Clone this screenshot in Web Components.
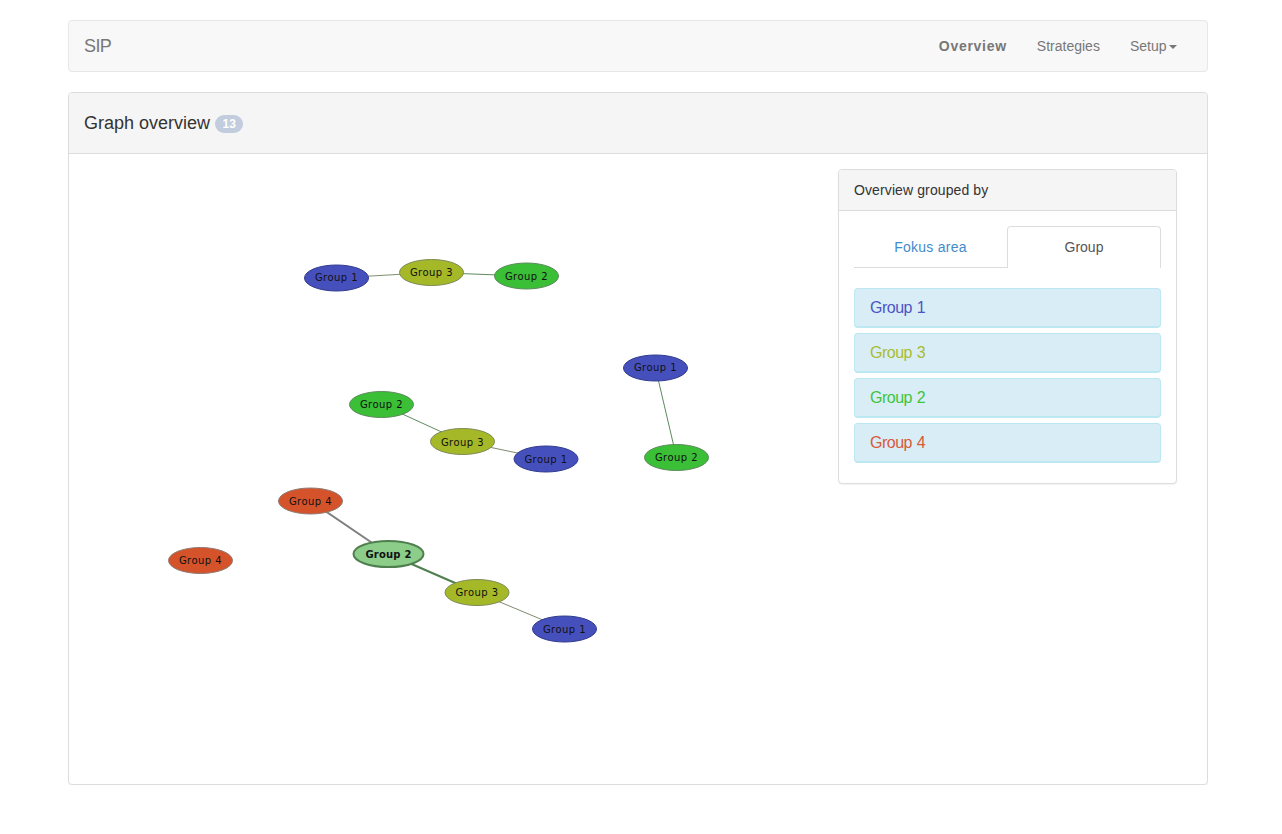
<!DOCTYPE html>
<html><head><meta charset="utf-8"><title>SIP</title>
<style>
html,body{margin:0;padding:0;background:#fff;font-family:"Liberation Sans",Arial,sans-serif;font-size:14px;line-height:20px;color:#333}
</style></head><body>
<sip-app>
  <sip-navbar brand="SIP">
    <sip-navlink active>Overview</sip-navlink>
    <sip-navlink>Strategies</sip-navlink>
    <sip-navlink caret>Setup</sip-navlink>
  </sip-navbar>
  <sip-panel count="13" heading="Graph overview">
    <sip-graph></sip-graph>
    <sip-side slot="side" heading="Overview grouped by">
      <sip-tabs></sip-tabs>
      <sip-group color="#4b55c4">Group 1</sip-group>
      <sip-group color="#a9bc30">Group 3</sip-group>
      <sip-group color="#3fc43c">Group 2</sip-group>
      <sip-group color="#d9593a">Group 4</sip-group>
    </sip-side>
  </sip-panel>
</sip-app>
<script>
function def(name, html, init){
  customElements.define(name, class extends HTMLElement{
    constructor(){super();this.attachShadow({mode:'open'}).innerHTML=html;}
    connectedCallback(){ if(init) init(this,this.shadowRoot); }
  });
}
def('sip-app',`<style>:host{display:block;width:1140px;margin-left:68px;padding-top:20px}</style><slot></slot>`);
def('sip-navbar',`<style>
:host{display:flex;box-sizing:border-box;height:52px;margin-bottom:20px;justify-content:space-between;background:#f8f8f8;border:1px solid #e7e7e7;border-radius:4px}
.b{font-size:18px;line-height:20px;color:#777;padding:15px;letter-spacing:-.6px}
nav{display:flex;margin-right:15.5px}
</style><div class="b"></div><nav><slot></slot></nav>`,(h,s)=>{s.querySelector('.b').textContent=h.getAttribute('brand')});
def('sip-navlink',`<style>
:host{display:block;padding:15px;color:#777;line-height:20px;font-size:14px}
:host([active]){font-weight:bold;letter-spacing:.72px}
.c{display:none;width:0;height:0;margin-left:2px;vertical-align:middle;border-top:4px solid #777;border-left:4px solid transparent;border-right:4px solid transparent}
:host([caret]) .c{display:inline-block}
</style><slot></slot><span class="c"></span>`);
def('sip-panel',`<style>
:host{display:block;box-sizing:border-box;height:693px;background:#fff;border:1px solid #ddd;border-radius:4px;box-shadow:0 1px 1px rgba(0,0,0,.05)}
header{box-sizing:border-box;height:61px;background:#f5f5f5;border-bottom:1px solid #ddd;border-radius:3px 3px 0 0;padding:20px 15px 0;font-size:18px;line-height:20px;color:#333;display:flex;align-items:flex-start}
.badge{display:block;margin:2px 0 0 5px;padding:3px 7.5px;font-size:12px;line-height:12px;font-weight:bold;color:#fff;background:#c1ccdd;border-radius:10px}
.body{display:flex;justify-content:space-between;padding:15px 30px 0 0}
</style><header><span class="t"></span><span class="badge"></span></header>
<div class="body"><slot></slot><slot name="side"></slot></div>`,(h,s)=>{s.querySelector('.t').textContent=h.getAttribute('heading');s.querySelector('.badge').textContent=h.getAttribute('count')});
def('sip-side',`<style>
:host{display:block;box-sizing:border-box;width:339px;height:315px;background:#fff;border:1px solid #ddd;border-radius:4px;box-shadow:0 1px 1px rgba(0,0,0,.05)}
header{box-sizing:border-box;height:41px;padding:10px 15px;background:#f5f5f5;border-bottom:1px solid #ddd;border-radius:3px 3px 0 0;color:#333;letter-spacing:.11px}
.body{padding:15px}
</style><header></header><div class="body"><slot></slot></div>`,(h,s)=>{s.querySelector('header').textContent=h.getAttribute('heading')});
def('sip-tabs',`<style>
:host{display:grid;grid-template-columns:153px 154px;height:42px;margin-bottom:20px}
div{box-sizing:border-box;text-align:center;padding-top:11px;line-height:20px;height:42px}
.a{color:#428bca;border-bottom:1px solid #ddd;letter-spacing:.25px}
.b{color:#555;background:#fff;border:1px solid #ddd;border-bottom:0;border-radius:4px 4px 0 0;padding-top:10px}
</style><div class="a">Fokus area</div><div class="b">Group</div>`);
def('sip-group',`<style>
:host{display:block;box-sizing:border-box;height:40px;margin-bottom:5px;padding:9px 15px;font-size:16px;line-height:20px;background:#d9edf7;border:1px solid #bce8f1;border-bottom-width:2px;border-radius:4px;letter-spacing:-.5px;word-spacing:.8px}
</style><slot></slot>`,(h)=>{h.style.color=h.getAttribute('color')});
def('sip-graph',`<style>
:host{display:block;width:750px;height:600px;position:relative}
svg{position:absolute;left:0;top:0;display:block}
text{font-family:"DejaVu Sans",Verdana,sans-serif;font-size:10px;letter-spacing:.45px;text-anchor:middle;fill:#111}
text.b{font-weight:bold;letter-spacing:.2px}
</style><svg id="g" width="750" height="600" viewBox="69 169 750 600" xmlns="http://www.w3.org/2000/svg"></svg>`,(h,s)=>{
  const C={1:['#4650bd','#2f3a8e'],2:['#3abf36','#5c8a5c'],3:['#a5b828','#7d8a55'],4:['#d5532b','#8e7a72']};
  const N=[[336.5,278,1,3],[431.5,272.5,3,3],[526.5,276,2,4],[655.5,368,1,3],[676.5,457.5,2,3],[381.5,404.5,2,3],[462.5,441.5,3,4],[546,459,1,4],[310.5,501,4,4],[200.5,560.5,4,3],[477,592.5,3,3],[564.5,629,1,4]];
  const E=[[[336.5,278],[431.5,272.5],'#7f8f70',1],[[431.5,272.5],[526.5,276],'#5e8a5e',1],[[655.5,368],[676.5,457.5],'#5e8a5e',1],[[381.5,404.5],[462.5,441.5],'#5e8a5e',1],[[462.5,441.5],[546,459],'#7f8a70',1],[[477,592.5],[564.5,629],'#7f8a70',1],[[310.5,501],[388.5,554],'#808080',2],[[388.5,554],[477,592.5],'#4f7f4f',2]];
  let m='';
  E.forEach(e=>m+=`<line x1="${e[0][0]}" y1="${e[0][1]}" x2="${e[1][0]}" y2="${e[1][1]}" stroke="${e[2]}" stroke-width="${e[3]}"/>`);
  N.forEach(n=>{const c=C[n[2]];m+=`<ellipse cx="${n[0]}" cy="${n[1]}" rx="32" ry="13" fill="${c[0]}" stroke="${c[1]}"/><text x="${n[0]}" y="${n[1]+n[3]}">Group ${n[2]}</text>`});
  m+=`<ellipse cx="388.5" cy="554" rx="35" ry="13" fill="#8ccd8a" stroke="#4f7f4f" stroke-width="2"/><text class="b" x="388.5" y="558">Group 2</text>`;
  s.getElementById('g').innerHTML=m;
});
</script>
</body></html>
